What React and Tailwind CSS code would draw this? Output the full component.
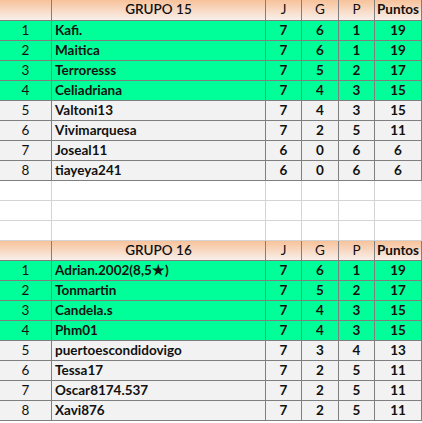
const groups = [
  {
    title: 'GRUPO 15',
    headerH: 'h-[21px]',
    rows: [
      ['Kafi.', 7, 6, 1, 19, true],
      ['Maitica', 7, 6, 1, 19, true],
      ['Terroresss', 7, 5, 2, 17, true],
      ['Celiadriana', 7, 4, 3, 15, true],
      ['Valtoni13', 7, 4, 3, 15, false],
      ['Vivimarquesa', 7, 2, 5, 11, false],
      ['Joseal11', 6, 0, 6, 6, false],
      ['tiayeya241', 6, 0, 6, 6, false],
    ],
  },
  {
    title: 'GRUPO 16',
    headerH: 'h-5',
    rows: [
      ['Adrian.2002(8,5★)', 7, 6, 1, 19, true],
      ['Tonmartin', 7, 5, 2, 17, true],
      ['Candela.s', 7, 4, 3, 15, true],
      ['Phm01', 7, 4, 3, 15, true],
      ['puertoescondidovigo', 7, 3, 4, 13, false],
      ['Tessa17', 7, 2, 5, 11, false],
      ['Oscar8174.537', 7, 2, 5, 11, false],
      ['Xavi876', 7, 2, 5, 11, false],
    ],
  },
];

const cols = 'grid grid-cols-[52px_214px_36px_37px_36px_47px]';

function Header({ title, h }) {
  const cell = 'flex items-center justify-center border-r border-b border-[#7f7f7f] bg-gradient-to-b from-[#f7c29a] to-[#f8efea]';
  return (
    <div className={`${cols} ${h}`}>
      <div className={cell} />
      <div className={`${cell} font-semibold`}>{title}</div>
      <div className={cell}>J</div>
      <div className={cell}>G</div>
      <div className={cell}>P</div>
      <div className={`${cell} font-bold`}>Puntos</div>
    </div>
  );
}

function Row({ row, idx }) {
  const [name, j, g, p, pts, top] = row;
  const bg = top ? 'bg-[#00ff99]' : 'bg-[#f2f2f2]';
  const cell = `flex items-center border-r border-b border-[#7f7f7f] ${bg} pt-px`;
  return (
    <div className={`${cols} h-5`}>
      <div className={`${cell} justify-center`}>{idx + 1}</div>
      <div className={`${cell} pl-[3px] font-bold`}>{name}</div>
      <div className={`${cell} justify-center font-bold`}>{j}</div>
      <div className={`${cell} justify-center font-bold`}>{g}</div>
      <div className={`${cell} justify-center font-bold`}>{p}</div>
      <div className={`${cell} justify-center font-bold`}>{pts}</div>
    </div>
  );
}

function EmptyRow() {
  const cell = 'border-r border-b border-[#d4d4d4] bg-white';
  return (
    <div className={`${cols} h-5`}>
      <div className={cell} />
      <div className={cell} />
      <div className={cell} />
      <div className={cell} />
      <div className={cell} />
      <div className={cell} />
    </div>
  );
}

export default function App() {
  return (
    <div
      className="h-[423px] w-[422px] overflow-hidden bg-white text-[13.5px] leading-none text-[#111]"
      style={{ fontFamily: 'Lato, "Noto Sans", sans-serif' }}
    >
      <Header title={groups[0].title} h={groups[0].headerH} />
      {groups[0].rows.map((r, i) => (
        <Row key={i} row={r} idx={i} />
      ))}
      <EmptyRow />
      <EmptyRow />
      <EmptyRow />
      <Header title={groups[1].title} h={groups[1].headerH} />
      {groups[1].rows.map((r, i) => (
        <Row key={i} row={r} idx={i} />
      ))}
    </div>
  );
}
